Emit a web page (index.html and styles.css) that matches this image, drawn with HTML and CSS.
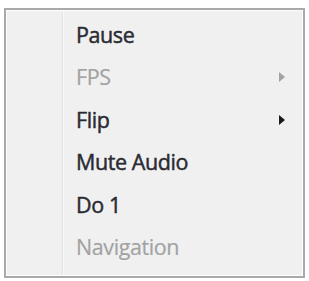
FILE: index.html
```html
<!DOCTYPE html>
<html>
<head>
<meta charset="utf-8">
<link rel="stylesheet" href="styles.css">
</head>
<body>
<div class="menu">
  <div class="gutter"></div>
  <ul class="items">
    <li class="item">Pause</li>
    <li class="item disabled">FPS<span class="arrow"></span></li>
    <li class="item">Flip<span class="arrow"></span></li>
    <li class="item">Mute Audio</li>
    <li class="item">Do 1</li>
    <li class="item disabled">Navigation</li>
  </ul>
</div>
</body>
</html>
```
FILE: styles.css
```css
html, body {
  margin: 0;
  padding: 0;
  background: #ffffff;
}
body {
  padding: 8px 0 0 4px;
}
.menu {
  position: relative;
  width: 297px;
  height: 266px;
  border: 2px solid #a9a9a9;
  box-shadow: inset 0 0 0 1px #fdfdfd;
  background: #f0f0f0;
  display: flex;
}
.gutter {
  width: 56px;
  border-right: 1px solid #e1e1e1;
  box-shadow: 1px 0 0 #fafafa;
  margin: 2px 0;
}
.items {
  list-style: none;
  margin: 0;
  padding: 4px 0 0 0;
  flex: 1;
}
.item {
  position: relative;
  height: 42.4px;
  line-height: 42px;
  padding-left: 13px;
  font-family: "Open Sans", "Noto Sans", sans-serif;
  font-size: 21.5px;
  font-weight: 400;
  color: #2a2a32;
  letter-spacing: -0.4px;
  -webkit-text-stroke: 0.45px #2a2a32;
}
.item.disabled {
  color: #a2a2a2;
  -webkit-text-stroke: 0.2px #a2a2a2;
}
.arrow {
  position: absolute;
  right: 18px;
  top: 16px;
  width: 0;
  height: 0;
  border-top: 5px solid transparent;
  border-bottom: 5px solid transparent;
  border-left: 6px solid #1a1a1a;
}
.disabled .arrow {
  border-left-color: #a2a2a2;
}
```
